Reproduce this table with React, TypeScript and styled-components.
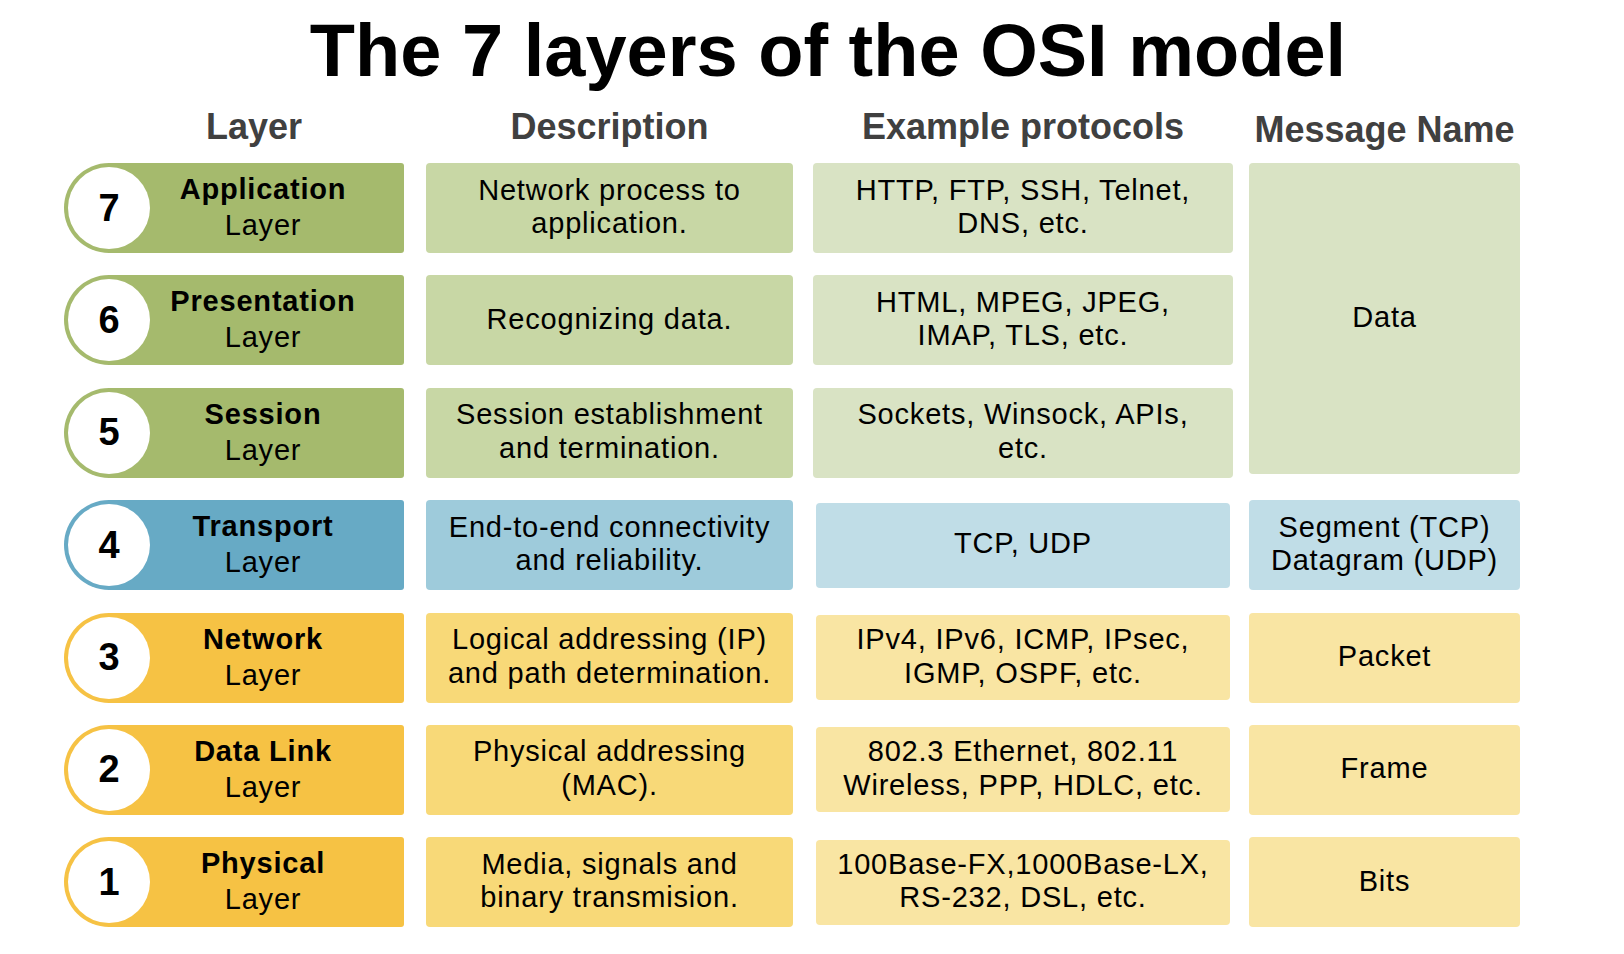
import React from 'react';
import styled, { createGlobalStyle } from 'styled-components';

type Tone = 'green' | 'blue' | 'yellow';

const palette: Record<Tone, { strong: string; mid: string; soft: string }> = {
  green: { strong: '#a5ba6d', mid: '#c8d7a5', soft: '#d9e3c4' },
  blue: { strong: '#67aac5', mid: '#9ecbdb', soft: '#c0dde7' },
  yellow: { strong: '#f6c244', mid: '#f8d978', soft: '#f9e5a3' },
};

const layers = [
  { n: 7, name: 'Application', tone: 'green', desc: ['Network process to', 'application.'], proto: ['HTTP, FTP, SSH, Telnet,', 'DNS, etc.'] },
  { n: 6, name: 'Presentation', tone: 'green', desc: ['Recognizing data.'], proto: ['HTML, MPEG, JPEG,', 'IMAP, TLS, etc.'] },
  { n: 5, name: 'Session', tone: 'green', desc: ['Session establishment', 'and termination.'], proto: ['Sockets, Winsock, APIs,', 'etc.'] },
  { n: 4, name: 'Transport', tone: 'blue', desc: ['End-to-end connectivity', 'and reliability.'], proto: ['TCP, UDP'], msg: ['Segment (TCP)', 'Datagram (UDP)'] },
  { n: 3, name: 'Network', tone: 'yellow', desc: ['Logical addressing (IP)', 'and path determination.'], proto: ['IPv4, IPv6, ICMP, IPsec,', 'IGMP, OSPF, etc.'], msg: ['Packet'] },
  { n: 2, name: 'Data Link', tone: 'yellow', desc: ['Physical addressing', '(MAC).'], proto: ['802.3 Ethernet, 802.11', 'Wireless, PPP, HDLC, etc.'], msg: ['Frame'] },
  { n: 1, name: 'Physical', tone: 'yellow', desc: ['Media, signals and', 'binary transmision.'], proto: ['100Base-FX,1000Base-LX,', 'RS-232, DSL, etc.'], msg: ['Bits'] },
] as { n: number; name: string; tone: Tone; desc: string[]; proto: string[]; msg?: string[] }[];

const lines = (items: string[]) =>
  items.map((t, i) => (
    <React.Fragment key={i}>
      {i > 0 && <br />}
      {t}
    </React.Fragment>
  ));

export default function App() {
  return (
    <>
      <GlobalStyle />
      <Page>
        <Title>The 7 layers of the OSI model</Title>
        <HeaderRow>
          <HeadCell $shift={40}>Layer</HeadCell>
          <HeadCell $lead={22}>Description</HeadCell>
          <HeadCell $lead={20}>Example protocols</HeadCell>
          <HeadCell $lead={16} $drop={3}>Message Name</HeadCell>
        </HeaderRow>
        <Table>
          {layers.map((l, i) => (
            <React.Fragment key={l.n}>
              <Pill $tone={l.tone} style={{ gridRow: i + 1 }}>
                <Badge>{l.n}</Badge>
                <PillText>
                  <strong>{l.name}</strong>
                  <br />
                  Layer
                </PillText>
              </Pill>
              <Box $bg={palette[l.tone].mid} $lead={22} style={{ gridRow: i + 1 }}>
                {lines(l.desc)}
              </Box>
              <Box $bg={palette[l.tone].soft} $lead={20} $inset={i > 2} style={{ gridRow: i + 1 }}>
                {lines(l.proto)}
              </Box>
              {l.msg && (
                <Box $bg={palette[l.tone].soft} $lead={16} style={{ gridRow: i + 1 }}>
                  {lines(l.msg)}
                </Box>
              )}
            </React.Fragment>
          ))}
          <DataBox $bg={palette.green.soft} $lead={16}>Data</DataBox>
        </Table>
      </Page>
    </>
  );
}

const GlobalStyle = createGlobalStyle`
  html, body {
    margin: 0;
    padding: 0;
    background: #ffffff;
  }
  body {
    font-family: "Liberation Sans", Arial, sans-serif;
    color: #000;
  }
`;

const Page = styled.div`
  width: 1624px;
  height: 954px;
  padding-top: 12.5px;
  box-sizing: border-box;
  overflow: hidden;
`;

const Title = styled.h1`
  margin: 0;
  padding-left: 32px;
  font-size: 74px;
  line-height: 75px;
  font-weight: bold;
  text-align: center;
`;

const columns = `
  display: grid;
  grid-template-columns: 340px 389px 440px 287px;
  margin-left: 64px;
`;

const HeaderRow = styled.div`
  ${columns}
  margin-top: 19px;
  height: 40px;
`;

const HeadCell = styled.div<{ $lead?: number; $shift?: number; $drop?: number }>`
  margin-left: ${(p) => p.$lead ?? 0}px;
  padding-left: ${(p) => p.$shift ?? 0}px;
  padding-top: ${(p) => p.$drop ?? 0}px;
  font-size: 36px;
  line-height: 40px;
  font-weight: bold;
  color: #404040;
  text-align: center;
  white-space: nowrap;
`;

const Table = styled.div`
  ${columns}
  margin-top: 16.5px;
  grid-template-rows: repeat(7, 90px);
  row-gap: 22.4px;
`;

const Pill = styled.div<{ $tone: Tone }>`
  grid-column: 1;
  display: flex;
  align-items: center;
  background: ${(p) => palette[p.$tone].strong};
  border-radius: 45px 3px 3px 45px;
`;

const Badge = styled.div`
  flex: none;
  width: 82px;
  height: 82px;
  margin-left: 4px;
  border-radius: 50%;
  background: #fff;
  display: flex;
  align-items: center;
  justify-content: center;
  font-size: 38px;
  font-weight: bold;
`;

const PillText = styled.div`
  flex: 1;
  padding-right: 28px;
  padding-bottom: 2px;
  text-align: center;
  font-size: 29px;
  line-height: 36px;
  letter-spacing: 0.8px;

  strong {
    font-weight: bold;
  }
`;

const Box = styled.div<{ $bg: string; $lead: number; $inset?: boolean }>`
  margin-left: ${(p) => p.$lead + (p.$inset ? 3 : 0)}px;
  margin-right: ${(p) => (p.$inset ? 3 : 0)}px;
  margin-top: ${(p) => (p.$inset ? 2.5 : 0)}px;
  margin-bottom: ${(p) => (p.$inset ? 2.5 : 0)}px;
  padding-bottom: 2px;
  background: ${(p) => p.$bg};
  border-radius: 4px;
  display: flex;
  align-items: center;
  justify-content: center;
  text-align: center;
  font-size: 29px;
  line-height: 33.5px;
  letter-spacing: 0.8px;
  white-space: nowrap;
`;

const DataBox = styled(Box)`
  grid-column: 4;
  grid-row: 1 / span 3;
  margin-bottom: 4px;
`;
